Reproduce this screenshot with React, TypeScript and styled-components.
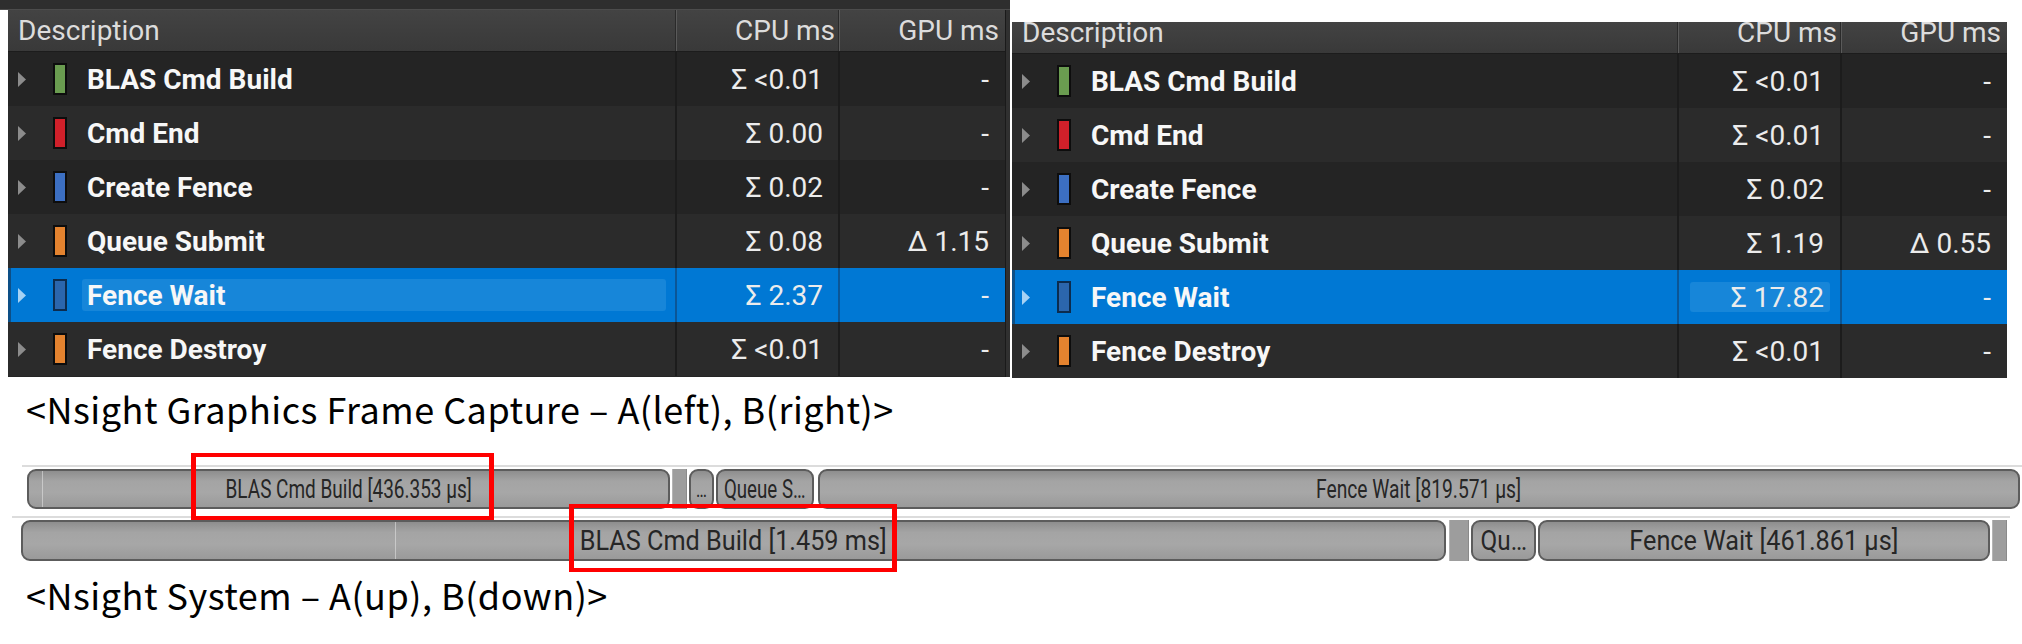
import React from 'react';
import styled, { createGlobalStyle } from 'styled-components';

const Global = createGlobalStyle`
  html, body { margin: 0; padding: 0; background: #ffffff; }
  body { width: 2022px; height: 644px; overflow: hidden; }
  * { box-sizing: border-box; }
`;

const Page = styled.div`
  width: 2022px;
  height: 644px;
  display: flex;
  flex-direction: column;
  background: #ffffff;
`;

const Shots = styled.div`
  display: flex;
  align-items: flex-start;
  height: 378px;
`;

const LeftShot = styled.div`
  width: 1010px;
  height: 377px;
  display: flex;
  flex-direction: column;
`;

const TopStrip = styled.div`
  height: 10px;
  background: #2e2e2e;
  border-bottom: 1px solid #4c4c4c;
`;

const LeftBody = styled.div`
  flex: 1;
  display: flex;
  padding-left: 8px;
`;

const Gutter = styled.div`
  width: 5px;
  background: #303030;
  border-left: 1px solid #1a1a1a;
`;

const RightShot = styled.div`
  margin-left: 2px;
  padding-top: 22px;
  width: 995px;
  height: 378px;
  display: flex;
`;

const Table = styled.div<{ $w: number }>`
  width: ${(p) => p.$w}px;
  display: flex;
  flex-direction: column;
  font-family: Roboto, 'Liberation Sans', sans-serif;
  background: #252525;
`;

const HeaderRow = styled.div<{ $h: number; $cols: string }>`
  display: grid;
  grid-template-columns: ${(p) => p.$cols};
  height: ${(p) => p.$h}px;
  background: linear-gradient(to bottom, #434343, #393939);
  border-bottom: 1px solid #1c1c1c;
  flex: none;
`;

const HeadCell = styled.div<{ $right?: boolean; $pr?: number; $divider?: boolean }>`
  display: flex;
  align-items: flex-end;
  justify-content: ${(p) => (p.$right ? 'flex-end' : 'flex-start')};
  padding: 0 ${(p) => p.$pr ?? 0}px 10px ${(p) => (p.$right ? 0 : 10)}px;
  font-size: 28px;
  line-height: 20px;
  color: #dcdcdc;
  white-space: nowrap;
  ${(p) =>
    p.$divider
      ? 'border-left: 1px solid #2a2a2a; box-shadow: inset 1px 0 0 #5a5a5a;'
      : ''}
`;

const Row = styled.div<{ $cols: string; $alt: boolean; $sel: boolean }>`
  display: grid;
  grid-template-columns: ${(p) => p.$cols};
  height: 54px;
  flex: none;
  background: ${(p) => (p.$sel ? '#0078d4' : p.$alt ? '#2b2b2b' : '#242424')};
  ${(p) => (p.$sel ? 'box-shadow: inset 3px 0 0 #0d4f86;' : '')}
`;

const DescCell = styled.div`
  display: flex;
  align-items: center;
  padding-left: 10px;
  min-width: 0;
`;

const Arrow = styled.svg`
  flex: none;
  width: 8px;
  height: 15px;
  margin-right: 27px;
`;

const Swatch = styled.div<{ $c: string; $sel: boolean }>`
  flex: none;
  width: 14px;
  height: 32px;
  background: ${(p) => p.$c};
  border: 2px solid ${(p) => (p.$sel ? '#0c2c4e' : '#0d0d0d')};
  margin-right: 15px;
`;

const Name = styled.div<{ $hl: boolean }>`
  flex: 1;
  height: 32px;
  display: flex;
  align-items: center;
  padding-left: 5px;
  margin-right: 9px;
  border-radius: 3px;
  background: ${(p) => (p.$hl ? '#1786d9' : 'transparent')};
  font-size: 28px;
  font-weight: 700;
  color: #f7f7f7;
  white-space: nowrap;
`;

const ValueCell = styled.div<{ $sel: boolean; $pr: number }>`
  display: flex;
  align-items: center;
  justify-content: flex-end;
  padding-right: ${(p) => p.$pr}px;
  font-size: 28px;
  color: #ececec;
  white-space: nowrap;
  border-left: 2px solid ${(p) => (p.$sel ? '#0b5696' : '#1c1c1c')};
`;

const ValueBox = styled.div<{ $hl: boolean }>`
  display: flex;
  align-items: center;
  justify-content: flex-end;
  height: 30px;
  ${(p) =>
    p.$hl
      ? 'background: #1786d9; border-radius: 3px; padding-right: 6px; margin-right: -6px; width: 140px;'
      : ''}
`;

const Caption = styled.div<{ $mt: number }>`
  margin-top: ${(p) => p.$mt}px;
  padding-left: 26px;
  height: 44px;
  font-family: 'Noto Sans CJK KR', 'Noto Sans', sans-serif;
  font-size: 36px;
  letter-spacing: 0.5px;
  line-height: 44px;
  color: #000000;
  white-space: nowrap;
`;

const Timeline = styled.div`
  position: relative;
  margin-top: 15px;
  padding-top: 20px;
`;

const Track = styled.div<{ $ml: number; $w: number; $mt: number }>`
  margin-left: ${(p) => p.$ml}px;
  margin-top: ${(p) => p.$mt}px;
  width: ${(p) => p.$w}px;
  border-top: 2px solid #dcdcdc;
  padding-top: 2px;
  display: flex;
`;

const Bar = styled.div<{ $w: number; $gap: number; $h: number; $flat?: boolean }>`
  flex: none;
  position: relative;
  width: ${(p) => p.$w}px;
  margin-left: ${(p) => p.$gap}px;
  height: ${(p) => p.$h}px;
  display: flex;
  align-items: center;
  justify-content: center;
  overflow: hidden;
  ${(p) =>
    p.$flat
      ? 'background: #9d9d9d; border-left: 1px solid #b4b4b4; border-right: 1px solid #8a8a8a;'
      : `border: 2px solid #5c5c5c;
         border-radius: 9px;
         background: linear-gradient(to bottom, #8e8e8e 0%, #a4a4a4 28%, #a7a7a7 60%, #9a9a9a 100%);`}
`;

const BarText = styled.span<{ $size: number; $sx: number }>`
  display: inline-block;
  flex: none;
  font-family: Roboto, 'Liberation Sans', sans-serif;
  font-size: ${(p) => p.$size}px;
  color: #262626;
  white-space: nowrap;
  transform: scaleX(${(p) => p.$sx});
`;

const Tick = styled.div<{ $x: number }>`
  position: absolute;
  left: ${(p) => p.$x}px;
  top: -2px;
  bottom: 0;
  width: 1px;
  background: rgba(230, 230, 230, 0.55);
`;

const RedBox = styled.div<{ $x: number; $y: number; $w: number; $h: number }>`
  position: absolute;
  left: ${(p) => p.$x}px;
  top: ${(p) => p.$y}px;
  width: ${(p) => p.$w}px;
  height: ${(p) => p.$h}px;
  border: 4px solid #ff0000;
  border-left-width: 5px;
  border-right-width: 5px;
`;

type Item = { name: string; color: string; cpu: string; gpu: string };

const rowsA: Item[] = [
  { name: 'BLAS Cmd Build', color: '#6a9c50', cpu: 'Σ <0.01', gpu: '-' },
  { name: 'Cmd End', color: '#d0202a', cpu: 'Σ 0.00', gpu: '-' },
  { name: 'Create Fence', color: '#3c6fc2', cpu: 'Σ 0.02', gpu: '-' },
  { name: 'Queue Submit', color: '#e4832f', cpu: 'Σ 0.08', gpu: 'Δ 1.15' },
  { name: 'Fence Wait', color: '#2b66ad', cpu: 'Σ 2.37', gpu: '-' },
  { name: 'Fence Destroy', color: '#e4832f', cpu: 'Σ <0.01', gpu: '-' },
];

const rowsB: Item[] = [
  { name: 'BLAS Cmd Build', color: '#6a9c50', cpu: 'Σ <0.01', gpu: '-' },
  { name: 'Cmd End', color: '#d0202a', cpu: 'Σ <0.01', gpu: '-' },
  { name: 'Create Fence', color: '#3c6fc2', cpu: 'Σ 0.02', gpu: '-' },
  { name: 'Queue Submit', color: '#e4832f', cpu: 'Σ 1.19', gpu: 'Δ 0.55' },
  { name: 'Fence Wait', color: '#2b66ad', cpu: 'Σ 17.82', gpu: '-' },
  { name: 'Fence Destroy', color: '#e4832f', cpu: 'Σ <0.01', gpu: '-' },
];

function ProfileTable({
  width,
  cols,
  headerH,
  rows,
  highlight,
}: {
  width: number;
  cols: string;
  headerH: number;
  rows: Item[];
  highlight: 'desc' | 'cpu';
}) {
  return (
    <Table $w={width}>
      <HeaderRow $h={headerH} $cols={cols}>
        <HeadCell>Description</HeadCell>
        <HeadCell $right $pr={3} $divider>
          CPU ms
        </HeadCell>
        <HeadCell $right $pr={6} $divider>
          GPU ms
        </HeadCell>
      </HeaderRow>
      {rows.map((r, i) => {
        const sel = i === 4;
        return (
          <Row key={r.name} $cols={cols} $alt={i % 2 === 1} $sel={sel}>
            <DescCell>
              <Arrow viewBox="0 0 8 15">
                <path d="M0 0 L8 7.5 L0 15 Z" fill={sel ? '#a6d2f4' : '#8c8c8c'} />
              </Arrow>
              <Swatch $c={r.color} $sel={sel} />
              <Name $hl={sel && highlight === 'desc'}>{r.name}</Name>
            </DescCell>
            <ValueCell $sel={sel} $pr={highlight === 'cpu' ? 16 : 15}>
              <ValueBox $hl={sel && highlight === 'cpu'}>{r.cpu}</ValueBox>
            </ValueCell>
            <ValueCell $sel={sel} $pr={16}>
              {r.gpu}
            </ValueCell>
          </Row>
        );
      })}
    </Table>
  );
}

export default function App() {
  return (
    <Page>
      <Global />
      <Shots>
        <LeftShot>
          <TopStrip />
          <LeftBody>
            <ProfileTable
              width={997}
              cols="667px 163px 167px"
              headerH={42}
              rows={rowsA}
              highlight="desc"
            />
            <Gutter />
          </LeftBody>
        </LeftShot>
        <RightShot>
          <ProfileTable
            width={995}
            cols="665px 163px 167px"
            headerH={32}
            rows={rowsB}
            highlight="cpu"
          />
        </RightShot>
      </Shots>

      <Caption $mt={8}>&lt;Nsight Graphics Frame Capture – A(left), B(right)&gt;</Caption>

      <Timeline>
        <Track $ml={22} $w={2000} $mt={0}>
          <Bar $w={643} $gap={5} $h={40}>
            <Tick $x={13} />
            <BarText $size={26} $sx={0.73}>BLAS Cmd Build [436.353 µs]</BarText>
          </Bar>
          <Bar $w={15} $gap={2} $h={40} $flat />
          <Bar $w={25} $gap={2} $h={40}>
            <BarText $size={22} $sx={0.74}>…</BarText>
          </Bar>
          <Bar $w={98} $gap={2} $h={40}>
            <BarText $size={26} $sx={0.72}>Queue S…</BarText>
          </Bar>
          <Bar $w={1202} $gap={4} $h={40}>
            <BarText $size={26} $sx={0.74}>Fence Wait [819.571 µs]</BarText>
          </Bar>
        </Track>
        <Track $ml={12} $w={1998} $mt={7}>
          <Bar $w={1425} $gap={9} $h={41}>
            <Tick $x={372} />
            <BarText $size={27} $sx={0.935}>BLAS Cmd Build [1.459 ms]</BarText>
          </Bar>
          <Bar $w={20} $gap={3} $h={41} $flat />
          <Bar $w={65} $gap={2} $h={41}>
            <BarText $size={27} $sx={0.9}>Qu…</BarText>
          </Bar>
          <Bar $w={452} $gap={2} $h={41}>
            <BarText $size={27} $sx={0.935}>Fence Wait [461.861 µs]</BarText>
          </Bar>
          <Bar $w={15} $gap={2} $h={41} $flat />
        </Track>
        <RedBox $x={191} $y={8} $w={303} $h={67} />
        <RedBox $x={569} $y={59} $w={328} $h={68} />
      </Timeline>

      <Caption $mt={11}>&lt;Nsight System – A(up), B(down)&gt;</Caption>
    </Page>
  );
}
